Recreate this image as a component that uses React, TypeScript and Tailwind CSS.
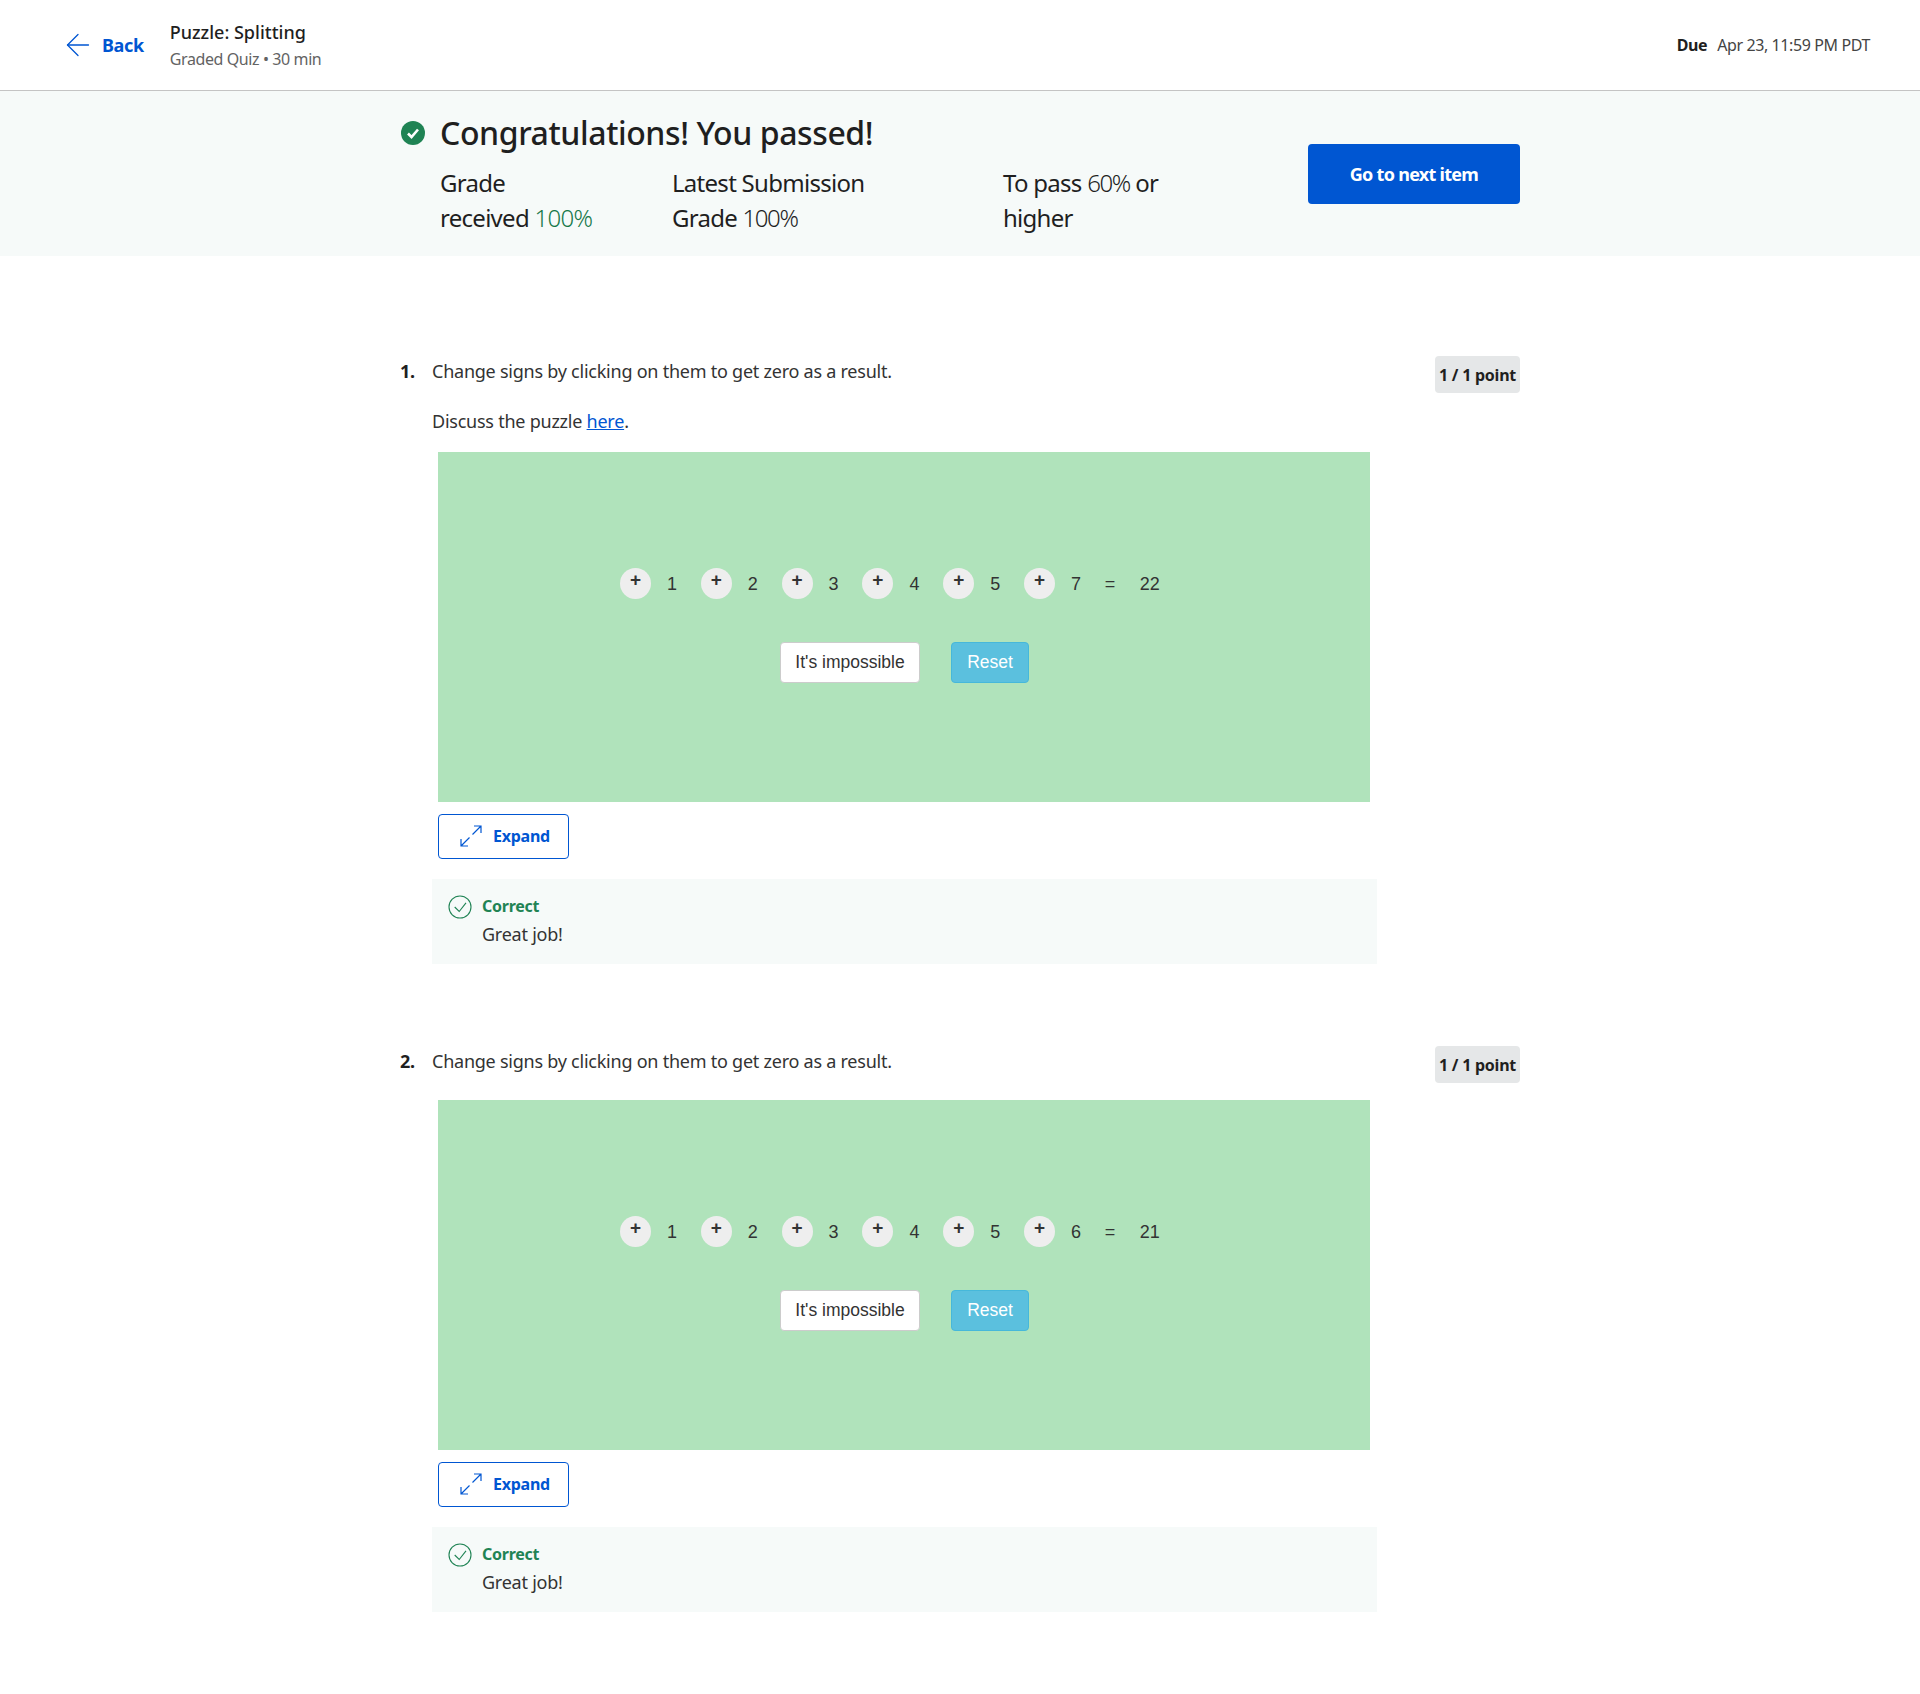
import type { ReactNode } from "react";
import { ArrowLeft } from "lucide-react";

function ExpandIcon() {
  return (
    <svg width="22" height="22" viewBox="0 0 22 22" fill="none" stroke="#0056d2" strokeWidth="1.2">
      <path d="M1 21 L9.5 12.5 M1 14 V21 H8" />
      <path d="M12.5 9.5 L21 1 M14 1 H21 V8" />
    </svg>
  );
}

function CorrectIcon() {
  return (
    <svg width="24" height="24" viewBox="0 0 24 24" fill="none" stroke="#1f8354" strokeWidth="1.1">
      <circle cx="12" cy="12" r="11" />
      <path d="M6.7 12 L11.2 16.5 L18 7.8" />
    </svg>
  );
}

function PassedIcon() {
  return (
    <svg width="24" height="24" viewBox="0 0 24 24">
      <circle cx="12" cy="12" r="12" fill="#1f8354" />
      <path d="M7 12.5 L10.5 16 L17 8.5" fill="none" stroke="#fff" strokeWidth="2.6" />
    </svg>
  );
}

function Sign() {
  return (
    <span className="flex h-[31px] w-[31px] items-start justify-center rounded-full bg-[#eeeeee] pt-[2px] text-[19px] leading-[20px] font-bold text-[#333]">
      +
    </span>
  );
}

function Puzzle({ last, total }: { last: number; total: number }) {
  const numbers = [1, 2, 3, 4, 5, last];
  return (
    <div className="ml-[6px] h-[350px] w-[932px] bg-[#b0e3bb] pt-[116px] pl-[182px] font-['Liberation_Sans',sans-serif] text-[18px] tracking-normal text-[#333]">
      <div className="flex h-[31px] items-center">
        {numbers.map((n) => (
          <div key={n} className="flex items-center">
            <Sign />
            <span className="w-[49.8px] pt-[2px] pl-[16px]">{n}</span>
          </div>
        ))}
        <span className="w-[35px] pt-[2px]">=</span>
        <span className="pt-[2px]">{total}</span>
      </div>
      <div className="mt-[43px] flex gap-[31px] pl-[160px] text-[17.5px]">
        <button className="h-[41px] w-[140px] rounded border border-[#cccccc] bg-white text-[#333]">
          It's impossible
        </button>
        <button className="h-[41px] w-[78px] rounded border border-[#46b8da] bg-[#5bc0de] text-white">
          Reset
        </button>
      </div>
    </div>
  );
}

function Feedback() {
  return (
    <div className="mt-[20px] flex h-[85px] w-[945px] gap-[10px] bg-[#f6faf9] pt-[16px] pl-[16px]">
      <CorrectIcon />
      <div>
        <div className="text-[16px] leading-[22px] font-bold text-[#1f8354]">Correct</div>
        <div className="mt-[5px] text-[18px] leading-[24px] text-[#333]">Great job!</div>
      </div>
    </div>
  );
}

function Question({ num, children, last, total }: { num: number; children: ReactNode; last: number; total: number }) {
  return (
    <div className="flex items-start justify-between">
      <div className="flex">
        <div className="w-[32px] text-[18px] leading-[30px] font-bold text-[#1f1f1f]">{num}.</div>
        <div>
          {children}
          <Puzzle last={last} total={total} />
          <button className="mt-[12px] ml-[6px] flex h-[45px] w-[131px] items-center gap-[11px] rounded border border-[#0056d2] pb-[2px] pl-[21px] text-[16px] font-bold text-[#0056d2]">
            <ExpandIcon />
            Expand
          </button>
          <Feedback />
        </div>
      </div>
      <div className="flex h-[37px] w-[85px] items-center justify-center rounded bg-[#e5e7e8] text-[16px] font-bold text-[#1f1f1f]">
        1 / 1 point
      </div>
    </div>
  );
}

export default function App() {
  return (
    <div className="min-h-[1694px] bg-white font-['Noto_Sans',sans-serif] tracking-[-0.015em] text-[#1f1f1f]">
      <header className="flex h-[91px] items-center justify-between border-b border-[#c4c4c4] pr-[50px] pl-[60px]">
        <div className="flex items-center">
          <ArrowLeft size={36} strokeWidth={0.85} className="text-[#0056d2]" />
          <span className="ml-[6px] text-[18px] font-bold tracking-[-0.02em] text-[#0056d2]">Back</span>
          <div className="ml-[26px]">
            <div className="text-[18px] leading-[24px] font-medium tracking-normal">Puzzle: Splitting</div>
            <div className="mt-[3px] text-[16px] leading-[24px] tracking-[-0.025em] text-[#636363]">Graded Quiz • 30 min</div>
          </div>
        </div>
        <div className="flex gap-[10px] text-[16px] tracking-[-0.025em]">
          <span className="font-bold">Due</span>
          <span className="text-[#444]">Apr 23, 11:59 PM PDT</span>
        </div>
      </header>
      <section className="h-[165px] bg-[#f6faf9]">
        <div className="mx-auto flex w-[1120px] items-start justify-between">
          <div className="flex pt-[22px]">
            <div className="mt-[8px] ml-[1px] w-[39px]">
              <PassedIcon />
            </div>
            <div>
              <h1 className="text-[32px] leading-[40px] font-medium tracking-[-0.41px]">Congratulations! You passed!</h1>
              <div className="mt-[12px] flex text-[24px] leading-[35px] tracking-[-0.03em]">
                <div className="w-[232px]">
                  Grade
                  <br />
                  received <span className="font-light text-[#16784a]">100%</span>
                </div>
                <div className="w-[331px]">
                  Latest Submission
                  <br />
                  Grade <span className="font-light tracking-[-0.06em]">100%</span>
                </div>
                <div>
                  To pass <span className="font-light tracking-[-0.06em]">60%</span> or
                  <br />
                  higher
                </div>
              </div>
            </div>
          </div>
          <button className="mt-[53px] h-[60px] w-[212px] rounded bg-[#0056d2] text-[18px] font-bold tracking-[-0.04em] text-white">
            Go to next item
          </button>
        </div>
      </section>
      <main className="mx-auto w-[1120px] pt-[100px]">
        <Question num={1} last={7} total={22}>
          <p className="text-[18px] leading-[30px] text-[#333]">Change signs by clicking on them to get zero as a result.</p>
          <p className="mt-[20px] mb-[16px] text-[18px] leading-[30px] text-[#333]">
            Discuss the puzzle <a className="text-[#0056d2] underline">here</a>.
          </p>
        </Question>
        <div className="mt-[82px]">
          <Question num={2} last={6} total={21}>
            <p className="mb-[24px] text-[18px] leading-[30px] text-[#333]">Change signs by clicking on them to get zero as a result.</p>
          </Question>
        </div>
      </main>
    </div>
  );
}
